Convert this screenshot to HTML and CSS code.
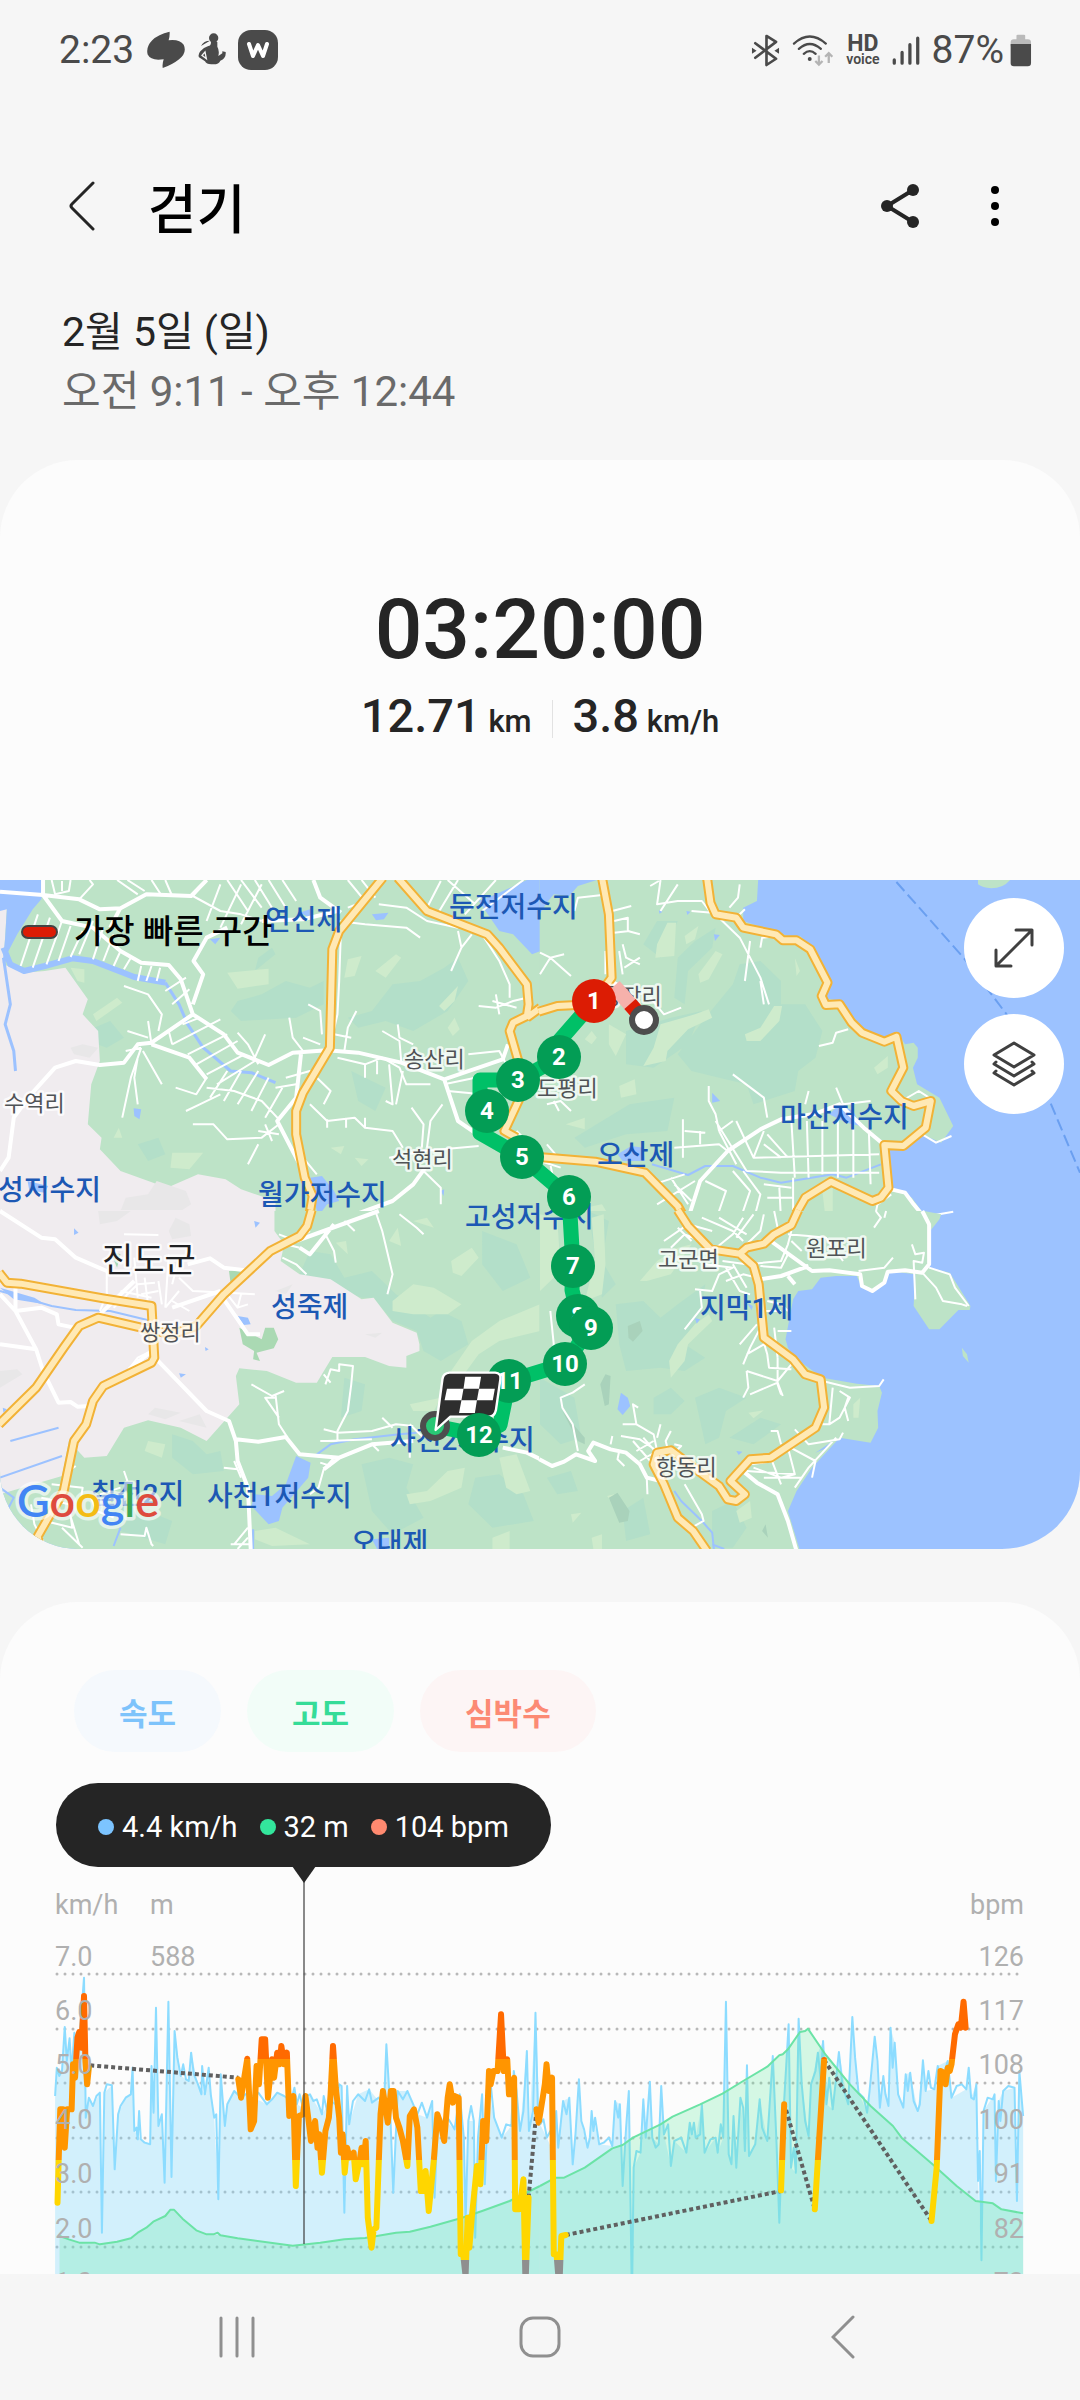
FILE: index.html
```html
<!DOCTYPE html>
<html lang="ko">
<head>
    <meta charset="UTF-8">
    <meta name="viewport" content="width=device-width, initial-scale=1.0">
    <title>걷기</title>
    <link rel="stylesheet" href="styles.css">
</head>
<body>

<div class="status-bar">
    <div class="status-left">
        <span class="status-text">2:23</span>
        <svg width="40" height="38" viewBox="286 34 120 116"><path fill="#4a4a4a" d="M357 36Q358 50 354 62Q388 58 400 76Q411 100 386 120Q366 136 336 147Q334 134 339 120Q300 126 290 106Q284 82 304 62Q322 44 357 36Z"/></svg>
        <svg width="28" height="38" viewBox="445 38 84 112">
            <circle cx="492" cy="58" r="14" fill="#4a4a4a"/>
            <path fill="#4a4a4a" d="M481 66L454 82Q462 66 481 66ZM484 70H503V84Q510 96 506 112L518 104L518 98L528 100Q530 118 512 126Q508 138 488 137Q470 138 466 128L448 116Q444 108 452 98Q462 86 476 82Q484 82 484 70Z"/>
            <path fill="none" stroke="#f6f6f6" stroke-width="4" d="M457 110L466 100L470 120Z"/>
        </svg>
        <svg width="40" height="40" viewBox="0 0 40 40">
            <rect width="40" height="40" rx="13" fill="#4a4a4a"/>
            <path fill="none" stroke="#fff" stroke-width="4" stroke-linecap="round" stroke-linejoin="round" d="M11 14L15 26L20 15L25 26L29 14"/>
        </svg>
    </div>
    <div class="status-right">
        <svg width="29" height="33" viewBox="34 38 86 100">
            <path fill="none" stroke="#4a4a4a" stroke-width="8" stroke-linejoin="round" stroke-linecap="round" d="M46 66L109 113L80 132V44L109 62L46 110"/>
            <path fill="#4a4a4a" d="M36 80L50 89L36 98ZM118 80L104 89L118 98Z"/>
        </svg>
        <svg width="42" height="33" viewBox="158 38 128 100">
            <path fill="none" stroke="#4a4a4a" stroke-width="7" stroke-linecap="round" d="M164 67Q212 24 261 67M179 83Q212 53 246 83M194 98Q212 82 230 98"/>
            <circle cx="212" cy="114" r="6" fill="#4a4a4a"/>
            <path fill="none" stroke="#b4b4b4" stroke-width="7" d="M240 103V130M229 120L240 131L251 120M270 126V97M259 107L270 96L281 107"/>
        </svg>
        <span class="hd-voice"><b>HD</b><small>voice</small></span>
        <svg width="28" height="33" viewBox="446 38 86 100">
            <path fill="none" stroke="#4a4a4a" stroke-width="10" stroke-linecap="round" d="M453 117V127M477 94V127M501 70V127M525 50V127"/>
        </svg>
        <span class="battery">
            <span class="status-text">87%</span>
            <svg width="22" height="33" viewBox="808 38 68 100">
                <path fill="#bababa" d="M828 42Q828 39 832 39H851Q855 39 855 42V53H863Q873 53 873 63V75H810V63Q810 53 820 53H828Z"/>
                <path fill="#4a4a4a" d="M810 68H873V127Q873 137 863 137H820Q810 137 810 127Z"/>
            </svg>
        </span>
    </div>
</div>

<main class="content">
    <header class="app-bar">
        <button class="icon-button" aria-label="뒤로">
            <svg width="28" height="50" viewBox="0 0 28 50"><path fill="none" stroke="#252525" stroke-width="3" stroke-linecap="round" stroke-linejoin="round" d="M25 2L4 23Q2 25 4 27L25 48"/></svg>
        </button>
        <h1>걷기</h1>
        <button class="icon-button" aria-label="공유">
            <svg width="40" height="46" viewBox="0 0 40 46"><path fill="none" stroke="#252525" stroke-width="4" d="M33 7L7 23L33 39"/><g fill="#252525"><circle cx="33" cy="7" r="6"/><circle cx="7" cy="23" r="6"/><circle cx="33" cy="39" r="6"/></g></svg>
        </button>
        <button class="icon-button" aria-label="더보기">
            <svg width="10" height="46" viewBox="0 0 10 46"><circle cx="5" cy="7" r="4"/><circle cx="5" cy="23" r="4"/><circle cx="5" cy="39" r="4"/></svg>
        </button>
    </header>

    <div class="date-block">
        <p class="date">2월 5일 (일)</p>
        <p class="time">오전 9:11 - 오후 12:44</p>
    </div>

    <section class="summary">
        <div class="duration">03:20:00</div>
        <div class="stats">
            <span>12.71<small> km</small></span>
            <span class="divider"></span>
            <span>3.8<small> km/h</small></span>
        </div>
    </section>

    <section class="map">
        <svg class="map-canvas" viewBox="0 0 1080 669" preserveAspectRatio="xMidYMid slice">
            <rect width="1080" height="669" fill="#9cc2ff"/>

            <!-- north west tile -->
            <g class="tile" transform="translate(0 -9) scale(.34436 .33333)">
                <path class="land" d="M0 0H1570V1052H0Z"/>
                <path class="forest" d="M690 390L760 370L830 330L900 350L940 330V400L860 440L700 450L670 420ZM1010 440L1080 420L1140 340L1220 330L1290 290L1330 260L1360 330L1300 420L1200 480L1120 450L1040 470ZM250 480L320 450L360 500L310 530L270 515ZM400 820L460 800L480 850L430 870ZM1020 600L1120 650L1090 720L1040 690ZM740 300L800 250L790 230L750 260Z"/>
                <path class="meadow" d="M660 305L780 293V340L690 353ZM270 430L340 380L355 395L280 450ZM205 290L245 295V335L225 330ZM1010 265L1050 255L1030 315L1000 320ZM1090 300L1150 250L1165 260L1120 320ZM1275 405L1330 345L1320 390L1290 420ZM1300 470L1320 440L1335 475L1315 495ZM500 845L590 845L550 895L495 890ZM1030 860L1070 865L1050 885ZM960 830L1000 825L990 850ZM330 800L345 770L355 800Z"/>
                <path class="urban" d="M0 110L20 110L10 280L70 305L130 300L190 290L255 385L240 430L285 480L290 570L265 640L255 760L295 800L290 835L350 900L485 950L575 910L655 925L700 955L800 990V1052H0Z"/>
                <path class="urban-dark" d="M205 530L240 520L285 530L260 560L215 550ZM455 930L540 960L555 1000L480 1050H290V1025L350 1020L365 980L430 970Z"/>
                <path class="water" d="M0 27H125L120 85L95 115L50 190L22 245L20 270L8 275L15 200L20 115L0 120ZM1390 90L1440 70L1530 27H1570V240L1545 250L1490 190L1450 180ZM1080 130L1128 125L1115 145L1092 148ZM610 205L640 200L625 220ZM388 712L410 715L405 745L390 735ZM900 920L935 915L970 960L985 990L950 1000L925 1035L912 990ZM80 930L140 945L130 965L85 958ZM1280 960L1290 955L1288 975ZM870 125L900 115L900 140Z"/>
                <path class="river" stroke-width="6" d="M10 230L30 280L70 300L130 285L210 262L270 270L390 318L480 335"/>
                <path class="river" stroke-width="3" d="M480 335L520 400L545 460L590 530L670 600L730 605L800 635M10 260L30 400L15 460L40 540L45 600"/>
                <path class="minor" d="M60 285L110 130M95 290L145 140M135 280L180 150M170 270L205 165M205 258L240 180M230 250L270 150M270 265L300 170M300 270L330 190M330 285L350 240M360 295L380 260M150 27L160 70L200 60L205 27M180 30V60M230 85L270 40L260 27M340 27L400 70M370 27L420 60M440 27L470 75M480 27L500 75M600 27L560 75L640 120L700 130L760 150M660 27L720 120M700 27L760 110M740 27L790 110M780 27L830 110M820 27L860 90M640 40L600 150M700 40L640 170M760 40L700 160M1010 27L1060 90L1010 110M1050 27L1090 80M1100 100L1180 110L1240 150L1330 170M980 150L1060 160L1180 170L1220 200M1280 30L1240 110M1330 27L1270 130M1300 27L1380 100M1440 27L1350 130M1520 27L1400 120M990 180L985 330L980 430L960 520M1330 180L1340 230L1310 300M1340 230L1370 190M1400 190L1450 270L1480 340V380M1390 405L1440 410L1490 390L1530 380M1430 390L1500 410M1440 370L1450 430"/>
                <path class="minor" d="M410 285L400 330M440 285L425 330M465 290L455 330M480 360L540 320M500 400L550 355M360 345L430 370L470 430L460 480M370 480L430 500M365 540L410 530M430 450L440 520M410 530L380 620L355 740M400 560L390 620L400 700M415 540L470 640M490 480L500 520M530 460L580 440M500 520L640 445M545 550L660 490M570 580L690 510M600 610L710 550M630 640L740 570M610 680L660 600M650 690L700 600M690 700L750 600M730 720L780 620M770 740L820 650M600 650L680 660L760 690L810 745M510 650L570 670L600 620M540 720L580 700L640 670M560 760L620 760L660 805L760 800L810 760M750 780L810 790M770 760L790 810M720 880L750 820M690 485L720 520L750 580M740 560L770 490M840 440L850 500L880 540M895 400L930 420L935 490M1035 420L1010 470L1000 540M880 500L930 520M970 490L1020 500M980 560L1060 580L1110 560L1160 590L1180 640L1250 640"/>
                <path class="minor" d="M1110 480L1160 510L1165 570M1155 460L1160 500L1200 520M1060 580V620M1095 570V610M1130 580L1140 700L1120 690M1170 600L1150 700M900 700L950 750L1030 740L1060 770L1140 780L1170 830M950 745V770M1005 740V770M1060 740V770M1195 710L1230 760L1225 830M1285 700L1250 750L1240 830M1290 640L1380 620M1300 660L1400 670M1130 860L1230 840L1390 825M1230 900L1280 950V1000M880 860L920 910M900 960L890 900M800 650L860 640M830 620L900 600L960 660L940 700M1500 780L1520 800L1560 820M1480 600L1450 540L1360 550"/>
                <path class="major" d="M0 62L125 72L230 85L290 115L350 112L425 70L555 75L600 27M125 27V72L180 150L270 170L350 240L410 275L490 282L525 325L560 430L650 490L690 545L780 582L850 545L950 538L1040 545L1165 575L1290 625L1460 565L1475 520M350 110L320 170M560 400L590 310L562 270L600 200L660 170M560 430L440 515L400 520L360 575L290 582L220 570L160 590L90 670L40 740L25 860L0 900M440 520L550 560L600 625M1290 625L1330 750L1400 800M875 540L860 680L805 750L870 880L905 970M980 1050L1140 990L1200 940L1235 890M760 150L880 145L980 120M910 27L930 80L990 125M0 1020L60 1050"/>
                <path class="road-edge" d="M1112 20L985 180L965 235L958 530L880 665L860 720V790L885 920L908 975L895 1052M1155 20L1240 120L1415 190L1450 230L1530 340L1535 400L1530 435L1490 455L1480 480L1505 570L1510 680L1465 780L1500 800M1530 440L1570 410"/>
                <path class="road" d="M1112 20L985 180L965 235L958 530L880 665L860 720V790L885 920L908 975L895 1052M1155 20L1240 120L1415 190L1450 230L1530 340L1535 400L1530 435L1490 455L1480 480L1505 570L1510 680L1465 780L1500 800M1530 440L1570 410"/>
            </g>

            <!-- north east tile -->
            <g class="tile" transform="translate(540 -9) scale(.34436 .33333)">
                <path class="land" d="M-1 0H635L630 90L590 110V150L720 195L755 195L800 240L840 330L820 380L870 390L940 480L1000 505L1045 495L1060 520L1085 515L1097 530V560L1083 590L1095 640L1160 680L1200 765L1165 815L1110 790L1060 835L1010 830L1020 950L1080 980L1130 1052H-1ZM1272 27H1365Q1345 52 1310 52Q1285 50 1272 40Z"/>
                <path class="forest" d="M480 440L560 340L580 280L640 270L700 330V400L770 400L820 480L800 560L750 600L740 660L620 700L600 640L520 620L440 600L400 550ZM250 480L380 440L470 420L430 520L330 590L250 580ZM100 800L260 700L390 680L370 780L250 790L130 830ZM450 210L510 170L500 230L430 300L420 400L390 380L400 260ZM300 220L340 150L400 150L350 260Z"/>
                <path class="meadow" d="M340 220L370 155L395 155L390 255L335 260ZM420 195L460 165L450 205L425 220ZM460 310L510 240L530 250L490 325L465 335ZM330 530L350 460L450 430L490 415L500 440L430 475L370 540L365 570L300 585ZM595 490L640 470L680 405L703 405L695 450L640 510L600 510ZM200 460L250 490L220 555L200 520ZM230 645L275 625L280 670L235 680ZM75 760L130 740V775ZM970 590L1010 555V590L980 610ZM740 260L755 300L745 315ZM150 480L165 500L150 520L130 505ZM820 960L850 950V1050H830ZM130 1010L180 1000L210 1050H130Z"/>
                <path class="water" d="M-1 27H165L110 45L85 75L40 70L20 95L-1 130ZM505 190L522 192L508 210ZM500 665L523 690L500 695ZM225 850L265 825L300 830L305 870L240 870ZM840 730L870 700L910 720L930 765L890 755ZM425 120L437 122L428 132ZM345 118L356 122L347 128Z"/>
                <path class="river" stroke-width="2" d="M325 880L430 912L480 885L560 885L640 920L700 935L850 910L890 920L990 880"/>
                <path class="minor" d="M100 120L110 80L200 70M350 27L340 100L400 90L470 90L500 130M400 40L350 120M320 45L345 30M440 120L500 125M580 40L575 80L550 110M595 115L560 150M520 140L580 200L640 320L665 400M610 210L595 330M640 330L650 400M640 230L645 200L690 195M210 120L265 105M215 150L255 140V180L290 190M215 185L260 180M240 220L250 260L290 280M245 290L290 260M230 240L240 310M190 240V310M0 245L30 260L70 250M30 260L0 310M30 260L90 315M320 380L360 430L410 410M810 525L850 515L860 485L895 475M560 610L650 680L660 740M490 645V690L510 730L520 780M415 745V860M420 780L480 785M465 780V820M390 830L520 820L545 840M520 780L570 880M510 750L600 900M570 750L620 860M520 780L560 750M650 780L620 860L985 850M730 750L740 920M775 750L780 920M820 750V910M865 740V920M910 750V920M955 780L960 940M600 900L700 905L985 905M650 820L700 860M660 790L720 860M650 940L730 950M660 980H735M695 950L700 1050M735 920V1050M560 900L610 960L580 1050M590 900L640 970L620 1050M480 930L540 960L510 1050M0 870L60 890M30 880L40 930M20 700L60 690L90 720M40 690L55 720M1050 690L1100 660L1130 680M860 650L880 700L960 690M780 660L770 700M1110 790L1150 815L1195 795M1020 970L980 1000L970 1050M1130 1035L1200 1022M330 940L420 910M340 1000L450 930M360 960L410 1020M380 920L430 1000M390 940L440 990M20 820L45 850"/>
                <path class="major" d="M428 1050L465 930L545 840L640 775L700 745L800 728L870 700L940 770L1000 822M1020 955L1060 965L1085 1000L1125 1050M205 330L240 350M0 258"/>
                <path class="road-edge" d="M180 20L200 130L208 320L150 400L50 405L-4 422M485 20L495 95L510 130L570 140L590 170L685 190L705 208H745L785 235L835 335L818 375L830 402L870 400L905 455L935 485L1000 512L1035 497L1055 590L1020 660L1050 690L1085 705L1135 690L1120 770L1055 825L1000 822L1012 950L990 980L965 990L845 932L770 980L730 1052M-4 858L160 872L305 905L400 1005L425 1052"/>
                <path class="road" d="M180 20L200 130L208 320L150 400L50 405L-4 422M485 20L495 95L510 130L570 140L590 170L685 190L705 208H745L785 235L835 335L818 375L830 402L870 400L905 455L935 485L1000 512L1035 497L1055 590L1020 660L1050 690L1085 705L1135 690L1120 770L1055 825L1000 822L1012 950L990 980L965 990L845 932L770 980L730 1052M-4 858L160 872L305 905L400 1005L425 1052"/>
                <path class="ferry" d="M1035 33L1230 260L1355 430L1480 690L1568 905"/>
            </g>

            <!-- south west tile -->
            <g class="tile" transform="translate(0 331) scale(.34436 .33333)">
                <path class="land" d="M0 0H1570V1020H0Z"/>
                <path class="forest" d="M870 190L900 120L960 130L1000 200L1080 180L1150 250L1250 320L1280 300L1340 330L1360 400L1280 450L1230 420L1210 360L1140 330L1085 260L1050 260ZM1000 500L1060 520L1050 600L990 620ZM500 670L560 690L600 730L640 720L650 780L560 790L500 740ZM1050 760L1130 740L1200 760L1180 830L1230 920L1140 970L1080 900ZM1380 800L1450 790L1520 850L1550 930L1430 950L1360 880ZM1400 60L1500 100L1540 200L1460 240L1400 160ZM300 900L380 880L500 930L480 1000L350 960Z"/>
                <path class="meadow" d="M1140 270L1200 220L1260 230L1340 280L1300 310L1200 310L1140 300ZM1310 150L1370 110L1390 140L1340 195L1315 185ZM1310 480L1370 390L1450 330L1568 280V360L1450 390L1390 430L1340 500ZM1180 850L1240 840L1300 780L1350 770L1340 830L1250 870L1190 880ZM1450 740L1500 730L1540 840L1500 850L1470 830ZM740 960L800 950L900 1000L790 1005L740 985ZM1190 580L1280 560L1260 600L1200 600ZM1130 90L1155 50L1165 105ZM975 95L1005 90L1010 130ZM1430 980L1480 960V1014H1430ZM430 690L480 700L470 740L420 720ZM1200 30L1240 20L1260 50Z"/>
                <path class="urban" d="M0 -3H797V60L825 100L815 150L870 190L960 205L1050 265L1085 260L1140 335L1210 365L1218 400V420L1180 435V470L1130 465L1060 438H965L920 515H860L775 480L695 472L685 495L695 580L600 690L525 650L430 628L360 650L310 735L245 740L200 690L180 795L0 850Z"/>
                <path class="urban-dark" d="M285 0H380L340 30L290 40ZM490 60L510 20L550 40L555 75L500 85ZM0 480L50 475L65 490L0 530ZM430 610L450 590L525 605L480 625ZM800 240L850 220L830 250ZM1060 370L1110 365L1090 380ZM520 630L580 610L600 650Z"/>
                <path fill="#aad9b3" d="M665 180L710 175V205L670 220ZM695 350L760 385L770 350L795 350L808 385L795 412L745 425L755 450L735 445L738 420L705 400ZM320 120L350 130L340 170Z"/>
                <path class="water" d="M860 735L902 755L895 800L820 890L810 930L780 940L730 885L740 850L790 855L830 820ZM690 315L720 320L728 340L708 342ZM738 30L755 35L742 50ZM215 52L228 65L215 72ZM520 487L540 490L525 500ZM595 408L606 415L597 420ZM8 590L20 595L10 605ZM1080 985L1130 980V1014H1095ZM0 230L100 260L130 280L40 265Z"/>
                <path class="river" stroke-width="2" d="M0 240L150 285L220 297L320 300L440 330M0 800L180 735M30 690L170 650M0 830L40 860L20 900M735 955V1014M920 730L960 700L1030 685L1160 670L1210 665M330 1005L350 950"/>
                <path class="minor" d="M310 180V250L290 300M330 290L400 220L450 215M360 70L460 72M390 140L400 260M420 200L430 280M460 210L470 280M490 130L480 290M520 200L560 240L660 245L740 250M500 270L550 300M480 290L520 240M350 240L440 260M410 250L460 240M520 140L500 220M660 250L690 290L720 280M700 250L690 290M370 480L400 440L440 420M410 470L400 445M640 330M810 70L860 90L900 60M830 100L870 110M820 140L860 160L890 190M940 60L970 120L975 155M1000 30L1030 60M1090 0L1110 60L1140 190L1125 250M1160 10L1210 50L1230 70M945 520L960 475L985 480V460L1025 465L1020 520L1010 600L980 660L980 690M940 490L960 515M730 520L790 555L825 540M800 560L770 560L810 620M800 550L810 640L835 680M940 655L980 665L1080 660L1150 640L1200 645M950 690L1080 685M930 690L980 690M1110 620L1140 650M1190 640L1230 680M970 740L940 775L925 830L900 850M930 755L960 765M1080 700L1100 720M1190 690V740M650 770L690 775M700 800L680 750M220 765L200 780M150 820L240 830L230 900M120 860L200 880L210 950L130 930M200 900L230 1000M180 950L240 1010M90 880L100 940L130 1000M260 850L280 900L330 920M360 780L370 810M350 970L420 975L425 950L440 1000L445 1005M680 1000L720 950M690 1014L720 980M670 1000H725M30 905L70 960M290 850L350 830"/>
                <path class="major" d="M0 0L120 80L160 85L220 140L310 180M0 250L45 300L105 415L125 480L170 575L205 573L225 587L260 585M45 230V300L120 290L165 310L170 340L215 350M0 400L105 415M450 440L600 600L665 630L685 690L690 750L720 830L728 1014M685 685L750 692L830 678L870 730L985 740L1080 700L1200 690M985 740L940 775M640 250L720 370H755M545 160L610 142L650 170L730 180L775 140M860 90L1100 0M870 110L900 130L970 40M290 310L390 210M440 420L375 475M500 290L640 240M1460 710L1530 725L1570 745"/>
                <path class="road-edge" d="M-3 185L20 215L60 218L300 262L440 285L448 440L440 455L300 525L270 570L250 640L215 690L185 840L110 975L115 1020M-3 640L105 530L185 410L230 345L285 320L410 350L500 370L570 345L650 250L785 120L870 75L892 45L905 -3"/>
                <path class="road" d="M-3 185L20 215L60 218L300 262L440 285L448 440L440 455L300 525L270 570L250 640L215 690L185 840L110 975L115 1020M-3 640L105 530L185 410L230 345L285 320L410 350L500 370L570 345L650 250L785 120L870 75L892 45L905 -3"/>
            </g>

            <!-- south east tile -->
            <g class="tile" transform="translate(540 331) scale(.34436 .33333)">
                <path class="land" d="M-2 0H1115L1165 10L1160 25L1133 60L1130 170L1190 185L1250 285L1248 297L1215 297L1160 355H1130L1085 285L1090 190L1010 180L990 225L965 240L930 220L920 195H860L815 200L790 235L750 240L735 265L713 385L720 410L740 440L820 500L920 518L985 525L993 545L980 600L982 650L960 695L870 680L790 770L745 840L720 900L755 1020H-2ZM1225 410L1240 430L1245 455L1228 435Z"/>
                <path class="forest" d="M220 280L300 270L350 320L400 280L480 220L470 300L420 400L480 440L420 480L350 470L250 480L230 400ZM330 560L380 530L420 570L380 610H330ZM450 560L520 530L600 560L540 600L520 680L480 700ZM140 0L200 30L180 150L220 220L180 260ZM0 500L100 560L120 680L60 700L0 640ZM550 680L640 620L700 640L620 700ZM240 900L300 860L320 970L250 990ZM500 900L560 870L600 950L560 1010H500ZM20 800L90 780L110 840L50 850Z"/>
                <path class="meadow" d="M150 20L185 10L190 160L180 250L130 270L160 150ZM290 210L340 150L400 110L440 100L380 190L310 210ZM375 450L400 400L450 340L490 310L500 330L430 400L420 450L380 500ZM910 580L930 560L925 620H910ZM570 900L610 870L615 920L580 935ZM605 605L650 598L620 622ZM90 910L120 905L95 935ZM195 855L215 850L210 875ZM0 10L50 20L60 180L0 240ZM150 980L180 970V1014H155Z"/>
                <path fill="#a9d2bb" d="M255 345L290 330L298 360L270 392L257 380ZM175 520L190 490L205 495L200 580L188 585ZM65 600L80 620L130 680V700L110 690ZM200 860L225 845L260 900L255 930L230 935ZM645 960L655 940L662 980Z"/>
                <path class="water" d="M235 545L255 560L262 585L240 612L225 595ZM600 275L618 285L615 298ZM450 322L465 325L455 338ZM570 720L588 722L577 732ZM800 725L850 690L835 710Z"/>
                <path class="river" stroke-width="2" d="M390 840L410 870L470 930L500 965L505 1014M500 1000L535 1014"/>
                <path class="minor" d="M30 300L40 400L30 440M130 520L95 545L60 560L65 590L95 640L110 720M240 640L280 640L270 580L285 590M280 640L330 670L340 720M235 675L290 685L340 720M350 640L340 680M380 660L365 690L370 710M270 690L320 750M300 680L350 740M280 720L330 690M290 750L340 720M400 715L410 705L390 700M205 700L210 675M230 720L225 745L245 765M310 800L312 850M350 780L360 850M420 820L470 910L475 930L440 950M360 90L430 40L500 60M380 110L420 70L470 90M400 50L440 90M470 20L560 60L590 90M520 20L600 70M590 20L560 70L500 120M620 10L570 80M650 10L640 60L600 100M680 0L690 50M530 150L600 160L700 150L720 100L730 60M640 165L700 170L720 130M720 70L780 75L830 80L880 150M730 90L760 120M450 235L500 240L520 190L560 170L480 160M540 170L580 240L610 250M560 160L600 230M465 240L470 290L420 355M540 210L590 190L630 200M660 270L700 280L720 300M650 300L700 300M630 340L580 400M640 350L610 410L590 460M640 360L660 430L665 470L730 475M680 350L690 440M690 360H730M600 430L650 400M600 480L690 510L730 460M590 560L605 530L600 480M610 550L690 515L705 555M690 440L690 520L700 550M740 470L765 480M820 510L900 530L985 525L998 505M850 530L840 640L820 640M870 540L900 560L870 620L840 640M895 560L885 590L895 630M670 660L690 660L700 700M740 655L780 700L870 685L880 665M860 680L780 770L740 830M710 700L800 750L790 800M720 710L740 790L700 800L620 770M670 740L700 820M600 780L740 790M610 760L680 750M650 800L760 800M590 0M1080 100L1090 130L1115 125L1110 155L1085 150L1090 265M1110 185L1150 230L1170 270L1225 280L1240 285M1130 170L1190 190L1205 230L1245 285M970 50L990 20L975 0M1005 0L1000 20M925 180L1000 170L1025 140"/>
                <path class="major" d="M-2 745L35 765L70 752L105 730L160 750L140 720L155 695L205 715L250 725L290 760L310 800L350 810M670 90L790 180L840 178L930 190L935 225L965 240L1000 215L1010 182L1060 178L1110 185L1130 160V40L1110 0M640 205L700 195L780 165M720 195L740 220M595 785L630 815L690 850L720 930L745 1020"/>
                <path class="road-edge" d="M400 -3L430 45L495 115L580 128L620 165L635 220L650 380L735 445L770 490L815 505L825 590L800 650L670 740L610 745L553 810L595 850L570 870L545 865L520 825L440 765L380 718L340 725L330 760L360 820L400 920L445 960L485 1020M580 128L600 110L650 98L680 70L730 42L750 -3"/>
                <path class="road" d="M400 -3L430 45L495 115L580 128L620 165L635 220L650 380L735 445L770 490L815 505L825 590L800 650L670 740L610 745L553 810L595 850L570 870L545 865L520 825L440 765L380 718L340 725L330 760L360 820L400 920L445 960L485 1020M580 128L600 110L650 98L680 70L730 42L750 -3"/>
            </g>

            <g class="lake-label">
                <text x="265" y="50">연신제</text>
                <text x="449" y="37">둔전저수지</text>
                <text x="780" y="247">마산저수지</text>
                <text x="597" y="285">오산제</text>
                <text x="-2" y="320">성저수지</text>
                <text x="258" y="325">월가저수지</text>
                <text x="465" y="347">고성저수지</text>
                <text x="271" y="437">성죽제</text>
                <text x="700" y="438">지막1제</text>
                <text x="390" y="570">사천2저수지</text>
                <text x="207" y="626">사천1저수지</text>
                <text x="91" y="624">칠전2지</text>
                <text x="351" y="673">오대제</text>
            </g>
            <g class="place-label">
                <text x="404" y="187">송산리</text>
                <text x="4" y="231">수역리</text>
                <text x="392" y="287">석현리</text>
                <text x="601" y="124">용장리</text>
                <text x="537" y="216">도평리</text>
                <text x="140" y="460">쌍정리</text>
                <text x="658" y="387">고군면</text>
                <text x="806" y="376">원포리</text>
                <text x="656" y="595">향동리</text>
            </g>
            <text class="city-label" x="102" y="392">진도군</text>
            <text class="google" x="17" y="637"><tspan fill="#4285f4">G</tspan><tspan fill="#de4b3e">o</tspan><tspan fill="#f4bc15">o</tspan><tspan fill="#4285f4">g</tspan><tspan fill="#3aa757">l</tspan><tspan fill="#de4b3e">e</tspan></text>

            <!-- walked route -->
            <path class="fastest" d="M644 140L614 106"/>
            <path stroke="#dc1c04" stroke-width="15" d="M644 140L630 124"/>
            <path class="route" d="M594 121L560 160L559 178L518 200H480V253L522 277L569 317L573 386L572 410L578 436L580 462L565 484L509 501L500 545L479 555L435 546"/>
            <circle cx="644" cy="140" r="12" fill="#fff" stroke="#4d4d4d" stroke-width="6"/>
            <circle cx="435" cy="546" r="12" fill="#28c775" stroke="#4d4d4d" stroke-width="6"/>
            <g class="pin">
                <circle class="pin-fast" cx="594" cy="121" r="22"/><text x="594" y="129">1</text>
                <circle cx="559" cy="177" r="22"/><text x="559" y="185">2</text>
                <circle cx="518" cy="200" r="22"/><text x="518" y="208">3</text>
                <circle cx="487" cy="231" r="22"/><text x="487" y="239">4</text>
                <circle cx="522" cy="277" r="22"/><text x="522" y="285">5</text>
                <circle cx="569" cy="317" r="22"/><text x="569" y="325">6</text>
                <circle cx="573" cy="386" r="22"/><text x="573" y="394">7</text>
                <circle cx="578" cy="436" r="22"/><text x="578" y="444">8</text>
                <circle cx="591" cy="448" r="22"/><text x="591" y="456">9</text>
                <circle cx="565" cy="484" r="22"/><text x="565" y="492">10</text>
                <circle cx="509" cy="501" r="22"/><text x="509" y="509">11</text>
            </g>
            <g transform="translate(0 331) scale(.34436 .33333)">
                <path fill="#2e2e2e" stroke="#fff" stroke-width="7" stroke-linejoin="round" d="M1305 485H1438Q1456 487 1453 505L1440 598Q1436 617 1420 617H1308L1265 657L1285 503Q1288 487 1305 485Z"/>
                <path fill="#fff" d="M1351 497H1397L1391 533H1346ZM1298 533H1346L1340 568H1291ZM1391 533H1437L1431 568H1385ZM1340 568H1385L1379 606H1333Z"/>
            </g>
            <g class="pin"><circle cx="479" cy="555" r="22"/><text x="479" y="563">12</text></g>
        </svg>
        <div class="map-legend"><span class="legend-mark"></span>가장 빠른 구간</div>
        <div class="map-buttons">
            <button class="round-button" aria-label="지도 확대">
                <svg width="40" height="40" viewBox="0 0 40 40"><path d="M3 37L37 3M22 2H38V17M2 22V38H17"/></svg>
            </button>
            <button class="round-button" aria-label="지도 유형">
                <svg width="44" height="46" viewBox="0 0 44 46"><path d="M22 2L42 14L22 26L2 14ZM4 21L2 23L22 35L42 23L40 21M4 30L2 32L22 44L42 32L40 30"/></svg>
            </button>
        </div>
    </section>

    <section class="chart-card">
        <div class="chips">
            <button class="chip chip-speed">속도</button>
            <button class="chip chip-altitude">고도</button>
            <button class="chip chip-heart">심박수</button>
        </div>
        <div class="tooltip">
            <span class="reading reading-speed">4.4 km/h</span>
            <span class="reading reading-altitude">32 m</span>
            <span class="reading reading-heart">104 bpm</span>
        </div>
        <svg class="chart" viewBox="0 0 1080 520">
            <defs>
                <!-- heart rate zones: hard stops at the zone limits -->
                <linearGradient id="zonesLeft" gradientUnits="userSpaceOnUse" x1="0" y1="0" x2="0" y2="1000">
                    <stop offset=".323" stop-color="#ff6a00"/><stop offset=".323" stop-color="#ff9500"/>
                    <stop offset=".626" stop-color="#ff9500"/><stop offset=".626" stop-color="#ffd600"/>
                    <stop offset=".927" stop-color="#ffd600"/><stop offset=".927" stop-color="#8f8f8f"/>
                </linearGradient>
                <linearGradient id="zonesRight" gradientUnits="userSpaceOnUse" x1="0" y1="240" x2="0" y2="1240">
                    <stop offset=".323" stop-color="#ff6a00"/><stop offset=".323" stop-color="#ff9500"/>
                    <stop offset=".626" stop-color="#ff9500"/><stop offset=".626" stop-color="#ffd600"/>
                    <stop offset=".927" stop-color="#ffd600"/><stop offset=".927" stop-color="#8f8f8f"/>
                </linearGradient>
                <path id="speedLeft" d="M160 435L165 350L172 375L180 360L188 228L194 330L202 262L208 360L216 245L228 300L244 80L249 500L258 440L270 465L280 435L290 425L296 845L303 425L310 400L325 403L333 655L343 490L350 465L365 440L380 430L385 350L390 540L396 530L400 565L404 480L409 565L420 575L436 580L440 345L446 485L453 170L460 525L470 490L478 695L489 152L498 678L507 240L515 320L525 375L532 340L540 385L548 390L555 305L563 370L575 400L585 430L587 345L595 430L606 350L612 430L622 500L628 490L634 745L641 370L647 450L653 525L660 460L680 420L700 440L720 425L735 440L750 425L775 460L790 445L805 425L825 435L845 450L855 410L862 460L870 430L880 470L890 435L900 430L910 450L920 445L935 490L940 435L950 480L960 450L975 460L985 400L992 405L1000 785L1008 405L1014 520L1025 450L1040 430L1060 450L1072 415L1080 455L1100 440L1115 470L1122 280L1132 450L1142 725L1155 420L1170 445L1183 420L1200 460L1212 490L1225 455L1240 500L1255 450L1262 740L1272 490L1285 540L1300 500L1320 535L1335 430L1347 560L1352 815L1360 510L1368 465L1376 510L1380 860L1388 560L1400 430L1408 700L1418 420L1425 400L1435 500L1457 560L1470 520L1485 525L1492 360L1500 420L1510 540L1520 480L1530 300L1536 540L1548 480L1555 185L1562 480L1568 520"/>
                <path id="speedRight" d="M0 760L10 745L20 800L30 780L40 850L47 720L53 830L67 690L77 730L85 680L95 880L103 790L113 625L120 750L128 775L138 830L145 800L150 720L155 780L160 740L172 820L185 815L200 800L210 825L218 690L227 740L232 700L240 945L250 770L258 660L267 1290L272 890L280 840L292 845L300 685L307 800L319 632L326 800L336 830L345 820L352 645L360 790L372 760L380 885L390 810L410 800L425 845L435 755L441 790L447 755L452 800L465 790L470 700L478 845L495 805L510 800L516 845L525 760L532 800L540 392L548 850L556 880L562 735L570 890L582 680L590 710L595 840L601 583L607 855L625 820L638 685L645 770L660 810L676 555L687 820L695 1055L705 760L722 460L729 890L737 830L743 905L751 443L760 640L770 750L780 795L787 640L800 600L807 545L815 625L822 510L832 700L840 620L850 715L868 543L878 640L895 700L907 438L915 560L925 665L940 680L950 725L957 660L972 497L980 570L987 710L997 615L1003 670L1012 705L1018 470L1024 590L1030 515L1040 670L1055 710L1062 610L1068 660L1075 605L1085 690L1097 720L1103 700L1112 568L1120 660L1128 600L1135 650L1145 655L1155 585L1165 640L1184 570L1195 680L1210 645L1225 640L1238 655L1245 590L1252 680L1260 685L1267 640L1272 930L1277 840L1282 1168L1288 720L1300 680L1315 685L1320 670L1324 930L1332 690L1337 750L1345 660L1360 645L1378 650L1385 990L1392 600L1403 735"/>
            </defs>

            <path class="grid" d="M57 107H1023M57 162H1023M57 216H1023M57 271H1023M57 325H1023M57 380H1023M57 434H1023"/>

            <g class="series" transform="translate(0 84) scale(.34436 .33333)">
                <path class="speed-area" d="M160 435L165 350L180 360L188 228L194 330L202 262L208 360L216 245L228 300L244 80L249 500L258 440L270 465L290 425L296 845L303 425L325 403L333 655L343 490L365 440L380 430L385 350L390 540L409 565L436 580L440 345L446 485L453 170L460 525L470 490L478 695L489 152L498 678L507 240L525 375L548 390L555 305L575 400L595 430L606 350L622 500L634 745L641 370L653 525L660 460L680 420L735 440L775 460L805 425L845 450L880 470L900 430L935 490L960 450L985 400L992 405L1000 785L1008 405L1014 520L1040 430L1072 415L1115 470L1122 280L1132 450L1142 725L1155 420L1183 420L1212 490L1240 500L1255 450L1262 740L1272 490L1320 535L1335 430L1347 560L1352 815L1360 510L1376 510L1380 860L1388 560L1400 430L1408 700L1418 420L1435 500L1457 560L1485 525L1492 360L1510 540L1530 300L1536 540L1555 185L1568 520V1200H160Z"/>
                <use href="#speedLeft" class="speed-line"/>
                <path class="altitude-area" d="M173 855L230 875L290 880L340 872L380 862L400 845L445 812L480 795L500 775L530 803L570 838L600 850L640 853L690 862L850 884L930 875L1000 865L1060 861L1150 845L1190 842L1250 827L1340 801L1400 780L1440 765L1480 750L1568 705V1200H173Z"/>
                <path class="altitude-line" d="M173 855L200 865L230 875H275L290 880L340 872L380 862L400 845L425 830L445 812L480 795L495 776H505L530 803L570 838L600 850H620L632 845L640 853L690 862L850 884L930 875L1000 865L1060 861L1150 845L1190 842L1250 827L1340 801L1400 780L1440 765L1480 750L1568 705"/>
                <path class="pause" d="M262 343L692 380M1535 740L1558 475"/>
                <path class="heart" stroke="url(#zonesLeft)" d="M167 755L170 640L175 475H183L188 590L195 475H208L212 340L218 380L225 260L230 243L236 290L244 135L248 330L253 400L258 350M692 385L700 440L718 323L722 400L728 535L738 510L745 345L752 400L760 265H770L778 440L790 325L796 380L805 305L812 340L817 285L825 340L833 305L840 495L852 435L859 705L868 495L880 490L887 435L895 500L903 570L915 510L922 590L927 550L935 665L945 540L955 500L960 430L967 285L975 410L985 500L990 605L995 550L1001 665L1008 590L1015 620L1027 605L1033 685L1045 625L1050 590L1055 640L1062 570L1068 800L1079 890L1085 835L1093 830L1105 490L1112 420L1126 515L1135 420H1143L1150 500L1160 530L1170 570L1183 645L1190 495L1202 475L1212 530L1222 720H1230L1236 660L1245 780L1260 625L1270 490L1280 520L1290 570L1300 440L1306 400L1315 455L1320 435L1332 440L1338 910H1345L1352 975L1358 800L1363 890L1370 800L1385 645L1395 700L1403 510L1412 570L1420 360L1425 400L1433 360H1445L1455 190L1463 360L1473 325L1478 430H1485L1493 380L1496 775H1508L1520 685L1526 1000L1535 740M1558 475L1564 515"/>
            </g>
            <g class="series" transform="translate(540 4) scale(.34436 .33333)">
                <path class="speed-area" d="M0 760L20 800L40 850L47 720L53 830L67 690L85 680L95 880L113 625L120 750L138 830L150 720L172 820L210 825L218 690L232 700L240 945L258 660L267 1290L272 890L292 845L300 685L307 800L319 632L326 800L345 820L352 645L360 790L380 885L390 810L425 845L435 755L452 800L470 700L478 845L510 800L516 845L532 800L540 392L548 850L556 880L562 735L570 890L582 680L595 840L601 583L607 855L625 820L638 685L660 810L676 555L687 820L695 1055L705 760L722 460L729 890L743 905L751 443L760 640L780 795L787 640L807 545L822 510L832 700L850 715L868 543L895 700L907 438L925 665L950 725L972 497L987 710L997 615L1012 705L1018 470L1030 515L1040 670L1055 710L1062 610L1075 605L1097 720L1112 568L1120 660L1145 655L1155 585L1184 570L1195 680L1238 655L1245 590L1252 680L1267 640L1272 930L1282 1168L1288 720L1320 670L1324 930L1332 690L1345 660L1378 650L1385 990L1392 600L1403 735V1440H0Z"/>
                <use href="#speedRight" class="speed-line"/>
                <path class="altitude-area" d="M0 945L45 920H70L130 890L210 832L240 822L270 800L350 760L385 737L465 700L530 668L590 630L660 587L700 552L720 535L755 483L778 473L830 552L900 640L960 705L1025 765L1050 800L1140 880L1210 945L1265 990L1315 997L1340 1015L1403 1027V1440H0Z"/>
                <path class="altitude-line" d="M0 945L45 920H70L130 890L210 832L240 822L270 800L350 760L385 737L465 700L530 668L590 630L660 587L695 553L705 550L720 535L755 483L770 480L778 473L830 552L900 640L960 705L1025 765L1050 800L1140 880L1210 945L1265 990L1315 997L1340 1015L1403 1027"/>
                <path class="pause" d="M75 1092L700 960M709 697L798 1015M825 567L1137 1050"/>
                <path class="heart" stroke="url(#zonesRight)" d="M-3 750L8 680L14 640L19 580L26 660L35 620L40 1150H48L56 1250L62 1095L75 1092M700 958L709 700M798 1015L825 567M1137 1050L1152 890L1163 600L1172 605L1178 640L1184 590L1190 600L1195 580L1205 490L1215 460L1222 470L1230 392L1236 470"/>
            </g>

            <g class="axis">
                <text x="55" y="47">km/h</text>
                <text x="150" y="47">m</text>
                <text x="55" y="99">7.0</text>
                <text x="150" y="99">588</text>
                <text x="55" y="153">6.0</text>
                <text x="55" y="207">5.0</text>
                <text x="55" y="262">4.0</text>
                <text x="55" y="316">3.0</text>
                <text x="55" y="371">2.0</text>
                <text x="55" y="425">1.0</text>
            </g>
            <g class="axis axis-right">
                <text x="1024" y="47">bpm</text>
                <text x="1024" y="99">126</text>
                <text x="1024" y="153">117</text>
                <text x="1024" y="207">108</text>
                <text x="1024" y="262">100</text>
                <text x="1024" y="316">91</text>
                <text x="1024" y="371">82</text>
                <text x="1024" y="425">73</text>
            </g>
            <path class="cursor" d="M304 0V377"/>
            <path fill="#252525" d="M292 -1H316L304 16Z"/>
        </svg>
    </section>
</main>

<nav class="nav-bar">
    <button aria-label="최근 앱"><svg width="38" height="42" viewBox="0 0 38 42"><path d="M3 2V40M19 2V40M35 2V40"/></svg></button>
    <button aria-label="홈"><svg width="42" height="42" viewBox="0 0 42 42"><rect x="2" y="2" width="38" height="38" rx="12"/></svg></button>
    <button aria-label="뒤로 가기"><svg width="24" height="44" viewBox="0 0 24 44"><path d="M22 2L2 22L22 42"/></svg></button>
</nav>

</body>
</html>
```

FILE: styles.css
```css
* {
    box-sizing: border-box;
}

body {
    margin: 0;
    height: 100vh;
    display: flex;
    flex-direction: column;
    background-color: #f6f6f6;
    color: #252525;
    font-family: Roboto, "Noto Sans CJK KR", sans-serif;
    overflow: hidden;
}

h1, p {
    margin: 0;
}

button {
    margin: 0;
    padding: 0;
    border: none;
    background: none;
    font-family: inherit;
    cursor: pointer;
}

svg {
    display: block;
    flex-shrink: 0;
}

/* Status bar */
.status-bar {
    height: 100px;
    flex-shrink: 0;
    padding: 0 48px 0 59px;
    display: flex;
    justify-content: space-between;
    align-items: center;
}

.status-left, .status-right, .battery {
    display: flex;
    align-items: center;
    gap: 12px;
}

.battery {
    gap: 6px;
}

.status-text {
    color: #4a4a4a;
    font-size: 39px;
    line-height: 46px;
}

.hd-voice {
    display: flex;
    flex-direction: column;
    align-items: center;
    color: #4a4a4a;
}

.hd-voice b {
    font-size: 23px;
    line-height: 18px;
}

.hd-voice small {
    font-size: 14px;
    line-height: 12px;
    font-weight: 600;
}

/* Page content, cut off by the navigation bar */
.content {
    flex: 1;
    min-height: 0;
    overflow: hidden;
}

.app-bar {
    height: 112px;
    margin-top: 50px;
    padding: 0 80px 0 68px;
    display: flex;
    align-items: center;
}

.app-bar h1 {
    flex: 1;
    margin-left: 52px;
    padding-top: 10px;
    color: #000;
    font-size: 53px;
    line-height: 64px;
    font-weight: 500;
}

.app-bar .icon-button:last-child {
    margin-left: 70px;
}

.date-block {
    padding: 40px 62px 38px;
    font-size: 41px;
    line-height: 60px;
}

.time {
    color: #6a6a6a;
    font-size: 42px;
}

.summary {
    padding: 120px 0 122px;
    border-radius: 78px 78px 0 0;
    background-color: #fcfcfc;
    text-align: center;
    font-weight: 500;
}

.duration {
    font-size: 84px;
    line-height: 100px;
}

.stats {
    display: flex;
    justify-content: center;
    align-items: center;
    gap: 20px;
    font-size: 47px;
    line-height: 72px;
}

.stats small {
    font-size: 31px;
}

.divider {
    width: 1px;
    height: 38px;
    background-color: #e2e2e2;
}

/* Map */
.map {
    position: relative;
    border-radius: 0 0 78px 78px;
    overflow: hidden;
}

.map-canvas {
    width: 100%;
    height: 669px;
}

.tile path {
    vector-effect: non-scaling-stroke;
}

.land { fill: #bde3c7; }
.forest { fill: #b3dfc9; }
.meadow { fill: #ceebcc; }
.urban { fill: #f0ecef; }
.urban-dark { fill: #e8e7e8; }
.water { fill: #9cc2ff; }

.river, .minor, .major, .road, .road-edge, .ferry {
    fill: none;
    stroke-linejoin: round;
}

.river { stroke: #9cc2ff; }

.minor {
    stroke: #fff;
    stroke-width: 2px;
}

.major {
    stroke: #fff;
    stroke-width: 4px;
}

.road-edge {
    stroke: #f2b236;
    stroke-width: 10px;
}

.road {
    stroke: #ffe9b5;
    stroke-width: 6px;
}

.ferry {
    stroke: #6a9ff0;
    stroke-width: 2px;
    stroke-dasharray: 12 5;
}

.lake-label {
    fill: #1c58b4;
    font-size: 28px;
    font-weight: 500;
}

.place-label {
    fill: #505356;
    font-size: 22px;
    stroke: rgba(255, 255, 255, 0.75);
    stroke-width: 5px;
    stroke-linejoin: round;
    paint-order: stroke;
}

.city-label {
    fill: #202124;
    font-size: 34px;
    stroke: rgba(255, 255, 255, 0.75);
    stroke-width: 5px;
    stroke-linejoin: round;
    paint-order: stroke;
}

.google {
    font-family: Lato, sans-serif;
    font-size: 45px;
    font-weight: 600;
    stroke: rgba(255, 255, 255, 0.6);
    stroke-width: 7px;
    stroke-linejoin: round;
    paint-order: stroke;
}

.route {
    fill: none;
    stroke: #00c067;
    stroke-width: 15px;
    stroke-linejoin: round;
}

.fastest {
    stroke: #f6b1ab;
    stroke-width: 15px;
}

.pin circle { fill: #039d55; }
.pin .pin-fast { fill: #dc1c04; }

.pin text {
    fill: #fff;
    font-size: 24px;
    font-weight: 700;
    text-anchor: middle;
}

.map-legend {
    position: absolute;
    top: 32px;
    left: 21px;
    display: flex;
    align-items: center;
    gap: 16px;
    color: #000;
    font-size: 33px;
    line-height: 40px;
    font-weight: 500;
}

.legend-mark {
    width: 37px;
    height: 14px;
    border: 2px solid #444;
    border-radius: 7px;
    background-color: #dc1c04;
}

.map-buttons {
    position: absolute;
    top: 18px;
    right: 16px;
    display: flex;
    flex-direction: column;
    gap: 16px;
}

.round-button {
    width: 100px;
    height: 100px;
    display: flex;
    justify-content: center;
    align-items: center;
    border-radius: 50%;
    background-color: #fff;
}

.round-button path {
    fill: none;
    stroke: #404040;
    stroke-width: 3px;
    stroke-linecap: round;
    stroke-linejoin: round;
}

/* Chart */
.chart-card {
    margin-top: 53px;
    padding-top: 68px;
    border-radius: 78px 78px 0 0;
    background-color: #fcfcfc;
}

.chips {
    display: flex;
    gap: 26px;
    padding: 0 74px;
}

.chip {
    height: 82px;
    padding: 0 45px;
    border-radius: 41px;
    font-size: 31px;
    font-weight: 700;
}

.chip-speed {
    background-color: #f5f9fd;
    color: #7dc3fb;
}

.chip-altitude {
    background-color: #f2fdf8;
    color: #36dc98;
}

.chip-heart {
    background-color: #fdf5f5;
    color: #fc8a74;
}

.tooltip {
    width: fit-content;
    height: 84px;
    margin: 31px 0 0 56px;
    padding: 4px 42px 0;
    display: flex;
    align-items: center;
    gap: 22px;
    border-radius: 42px;
    background-color: #252525;
    color: #fff;
    font-size: 29px;
}

.reading {
    display: flex;
    align-items: center;
    gap: 8px;
}

.reading::before {
    content: "";
    width: 16px;
    height: 16px;
    border-radius: 50%;
}

.reading-speed::before { background-color: #7cc4ff; }
.reading-altitude::before { background-color: #33e69c; }
.reading-heart::before { background-color: #ff8a70; }

.chart {
    width: 100%;
    height: auto;
    overflow: visible;
}

.grid {
    fill: none;
    stroke: #b8b8b8;
    stroke-width: 3px;
    stroke-linecap: round;
    stroke-dasharray: 0 8;
}

.series path, .speed-line, #speedLeft, #speedRight {
    vector-effect: non-scaling-stroke;
}

.speed-area { fill: rgba(125, 215, 252, 0.33); }
.altitude-area { fill: rgba(92, 232, 156, 0.25); }

.speed-line, .altitude-line, .pause, .heart {
    fill: none;
    stroke-linejoin: round;
}

.speed-line {
    stroke: #8cdcff;
    stroke-width: 2px;
}

.altitude-line {
    stroke: #6be3a6;
    stroke-width: 2px;
}

.pause {
    stroke: #606060;
    stroke-width: 4px;
    stroke-dasharray: 4 3;
}

.heart {
    stroke-width: 6px;
    stroke-linecap: round;
}

.axis {
    fill: #b0b0b0;
    font-size: 27px;
}

.axis-right {
    text-anchor: end;
}

.cursor {
    stroke: rgba(60, 60, 60, 0.6);
    stroke-width: 2px;
}

/* Navigation bar */
.nav-bar {
    height: 126px;
    flex-shrink: 0;
    padding: 0 86px;
    display: flex;
    background-color: #f6f6f6;
}

.nav-bar button {
    flex: 1;
    display: flex;
    justify-content: center;
    align-items: center;
}

.nav-bar path, .nav-bar rect {
    fill: none;
    stroke: #8f8f8f;
    stroke-width: 3px;
    stroke-linecap: round;
}
```
